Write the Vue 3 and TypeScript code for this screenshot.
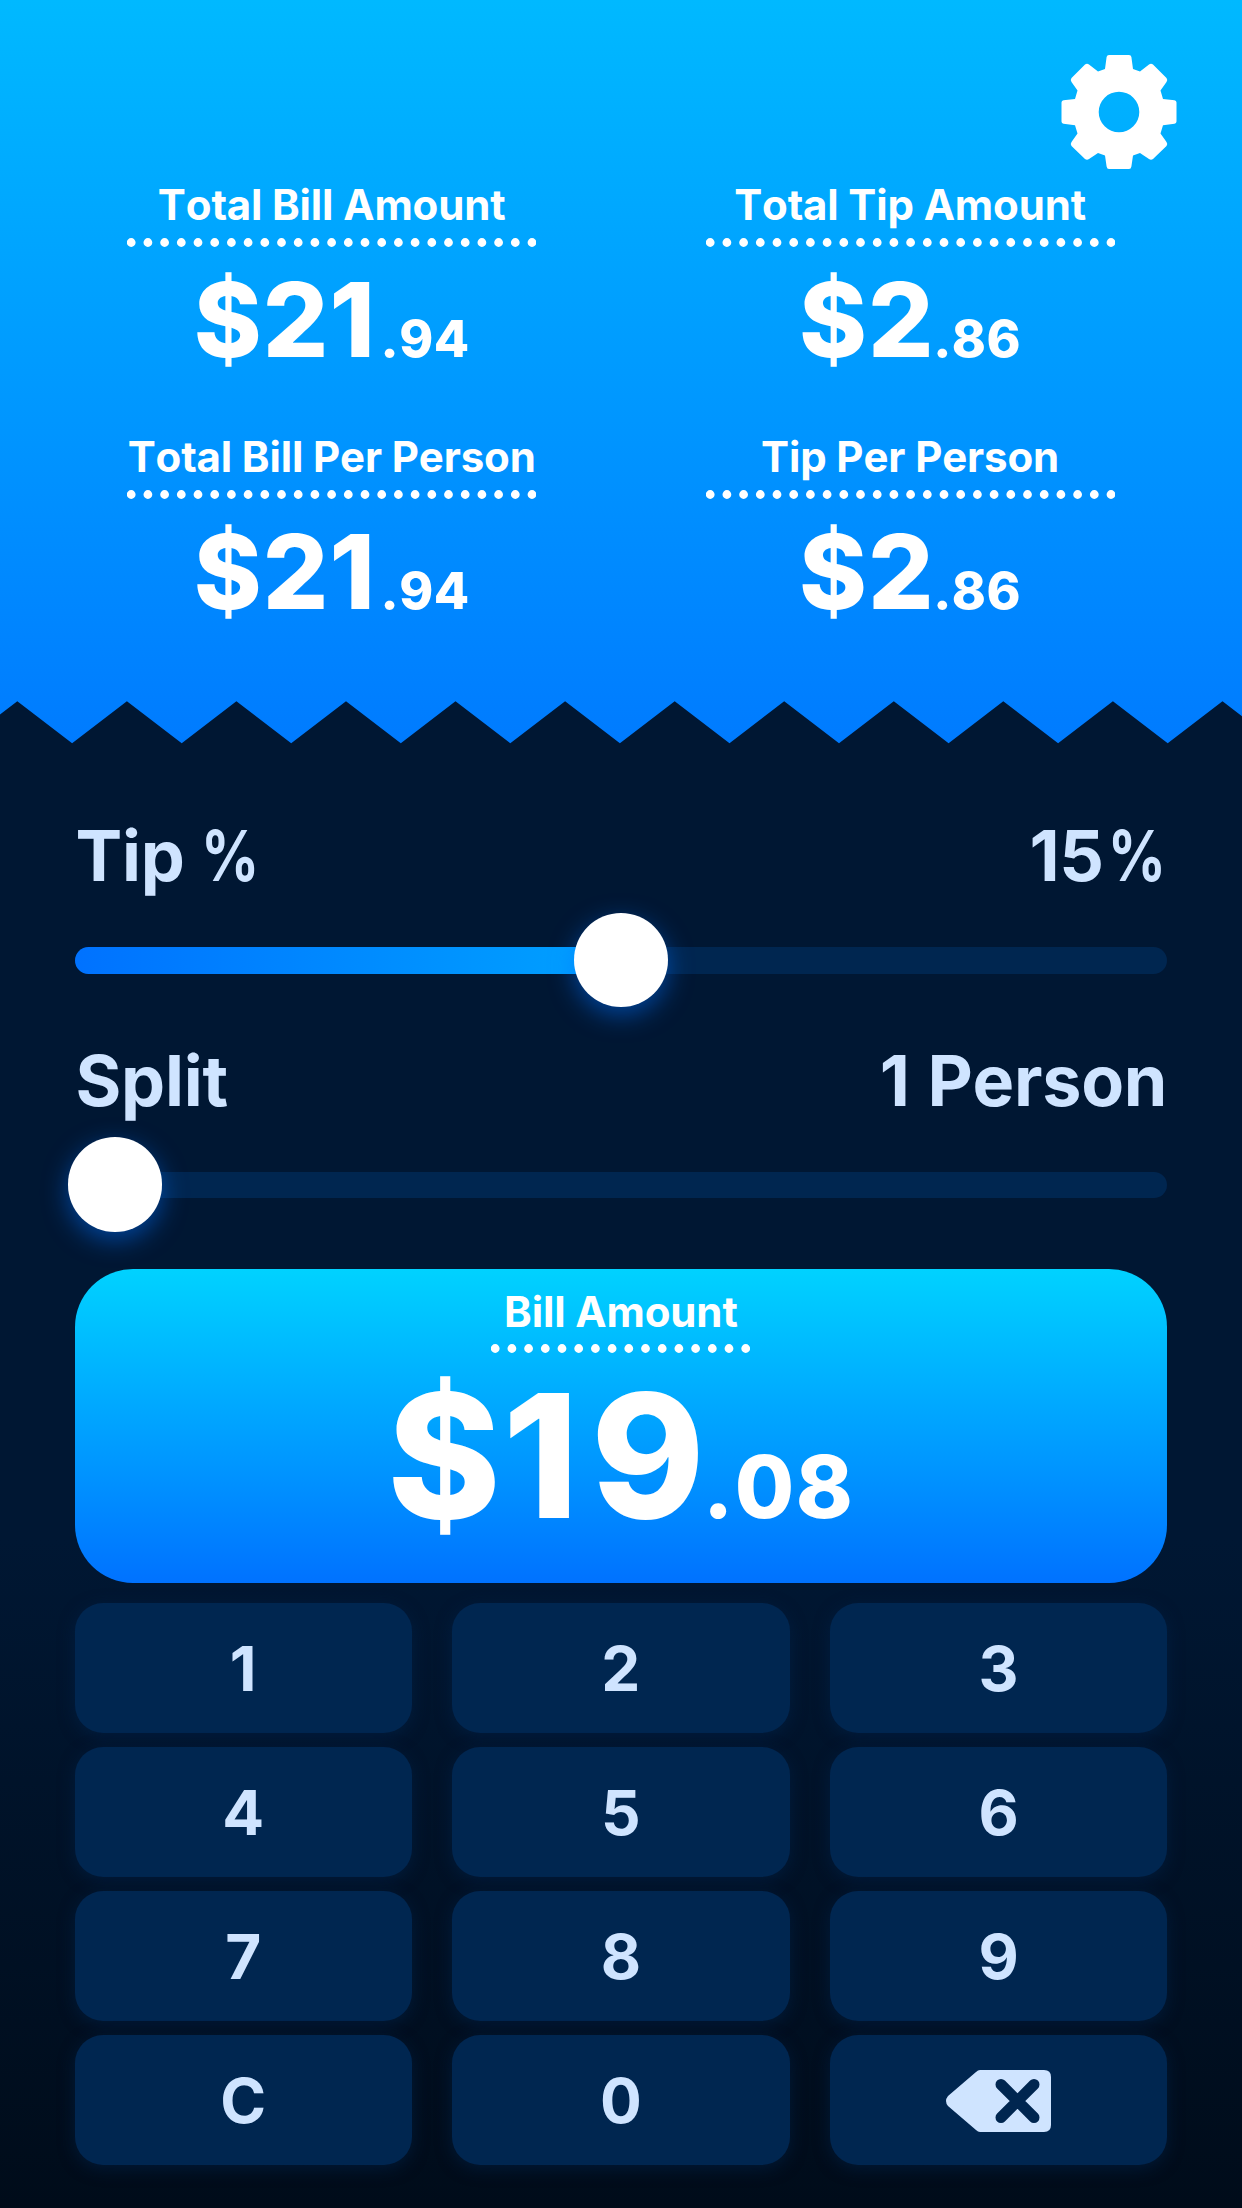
<script setup lang="ts">
import { computed, ref } from 'vue'

interface Metric {
  label: string
  whole: string
  cents: string
}

const metrics: Metric[] = [
  { label: 'Total Bill Amount', whole: '$21', cents: '.94' },
  { label: 'Total Tip Amount', whole: '$2', cents: '.86' },
  { label: 'Total Bill Per Person', whole: '$21', cents: '.94' },
  { label: 'Tip Per Person', whole: '$2', cents: '.86' },
]

const keys: string[] = ['1', '2', '3', '4', '5', '6', '7', '8', '9', 'C', '0', 'back']

const tip = ref(15)
const people = ref(1)
const tipFill = computed(() => `${(tip.value / 30) * 100}%`)

const teeth = computed(() => {
  const points: string[] = ['0,44', '0,14.6']
  for (let i = 0; i < 12; i++) {
    const peak = 17.3 + i * 109.56
    points.push(`${peak.toFixed(1)},1.3`, `${(peak + 54.8).toFixed(1)},43.3`)
  }
  points.push('1400,44')
  return points.join(' ')
})
</script>

<template>
  <main class="app">
    <header class="summary">
      <div class="toolbar">
        <button class="settings" aria-label="Settings">
          <svg width="116" height="116" viewBox="-58 -58 116 116">
            <path
              fill="#fff"
              fill-rule="evenodd"
              d="M-10-57H10Q12-57 12.400-55L14-43L21-40.500L30-47.500Q32-49 34-47.500L47.500-34Q49-32 47.500-30L41.500-21.500L44-13L55.500-11.800Q57.500-11.500 57.500-9.500V9.500Q57.500 11.500 55.500 11.800L44 13.200L41.500 21.500L47.500 30Q49 32 47.500 34L34 47Q32 48.500 30 47L21 41L14 43.500L12.400 54.500Q12 57 10 57H-10Q-12 57-12.400 54.500L-14 43.500L-21 41L-30 47Q-32 48.500-34 47L-47.500 34Q-49 32-47.500 30L-41.500 21.500L-44 13.200L-55.500 11.800Q-57.500 11.500-57.500 9.500V-9.500Q-57.500-11.500-55.500-11.800L-44-13L-41.500-21.500L-47.500-30Q-49-32-47.500-34L-34-47.500Q-32-49-30-47.500L-21-40.500L-14-43L-12.400-55Q-12-57-10-57ZM0-20.300A20.300 20.300 0 1 0 0 20.300A20.300 20.300 0 1 0 0-20.300Z"
            />
          </svg>
        </button>
      </div>
      <div class="metrics">
        <section v-for="m in metrics" :key="m.label" class="metric">
          <h2 class="label">{{ m.label }}</h2>
          <svg class="dots" width="409" height="9" viewBox="0 0 409 9">
            <line x1="4.200" y1="4.500" x2="406" y2="4.500" stroke="#fff" stroke-width="8.800" stroke-linecap="round" stroke-dasharray="0 16.700" />
          </svg>
          <p class="amount"><span v-for="(d, i) in m.whole" :key="i" :class="{ one: d === '1' }">{{ d }}</span><span class="cents">{{ m.cents }}</span></p>
        </section>
      </div>
      <svg class="teeth" width="1242" height="44" viewBox="0 0 1242 44">
        <polygon :points="teeth" fill="#001733" />
      </svg>
    </header>

    <div class="controls">
      <section class="slider">
        <div class="row">
          <span>Tip <span class="percent left">%</span></span>
          <span class="value shifted">{{ tip }}<span class="percent">%</span></span>
        </div>
        <div class="control">
          <div class="track"><div class="fill" :style="{ width: tipFill }"></div></div>
          <div class="thumb mid"></div>
        </div>
      </section>
      <section class="slider">
        <div class="row">
          <span>Split</span>
          <span class="value">{{ people }} Person</span>
        </div>
        <div class="control">
          <div class="track"></div>
          <div class="thumb start"></div>
        </div>
      </section>

      <section class="bill">
        <h2 class="label">Bill Amount</h2>
        <svg class="dots" width="259" height="9" viewBox="0 0 259 9">
          <line x1="4.200" y1="4.500" x2="256" y2="4.500" stroke="#fff" stroke-width="8.800" stroke-linecap="round" stroke-dasharray="0 16.700" />
        </svg>
        <p class="amount big">$<span class="one">1</span>9<span class="cents">.08</span></p>
      </section>

      <div class="keypad">
        <button v-for="k in keys" :key="k" class="key">
          <svg v-if="k === 'back'" class="back" width="106" height="62" viewBox="0 0 106 62" aria-label="Delete">
            <path d="M34 0H98Q105 0 105 7V55Q105 62 98 62H34Q32 62 30 60L2 36Q-2 31 2 26L30 2Q32 0 34 0Z" fill="#cfe4ff" />
            <path d="M55 14.500L88 47.500M88 14.500L55 47.500" stroke="#002650" stroke-width="11" stroke-linecap="round" />
          </svg>
          <template v-else>{{ k }}</template>
        </button>
      </div>
    </div>
  </main>
</template>

<style>
body {
  margin: 0;
  background: #000c1a;
}
</style>

<style scoped>
.app {
  width: 1242px;
  height: 2208px;
  overflow: hidden;
  font-family: 'Inter', 'Liberation Sans', sans-serif;
  font-kerning: none;
  background: linear-gradient(180deg, #001733 0, #001733 1540px, #000c1a 2208px);
}
.summary {
  display: flex;
  flex-direction: column;
  height: 744px;
  color: #fff;
  background: linear-gradient(180deg, #00b9ff, #007bff);
}
.toolbar {
  box-sizing: border-box;
  display: flex;
  justify-content: flex-end;
  height: 180px;
  padding: 54px 65px 0 0;
}
button {
  margin: 0;
  padding: 0;
  border: 0;
  background: none;
  font: inherit;
}
.settings {
  width: 116px;
  height: 116px;
}
svg {
  display: block;
}
.metrics {
  display: grid;
  grid-template-columns: 578.4px 578.4px;
  row-gap: 62px;
  padding-left: 42.5px;
}
.metric {
  display: flex;
  flex-direction: column;
  align-items: center;
  height: 190px;
}
.label {
  margin: 0 0 7.500px;
  font-size: 42px;
  line-height: 50px;
  font-weight: 700;
  letter-spacing: -0.130px;
  white-space: nowrap;
}
.amount {
  margin: 23.500px 0 0;
  font-size: 103px;
  line-height: 100px;
  font-weight: 800;
  letter-spacing: 1px;
  white-space: nowrap;
}
.one {
  margin-right: 0.060em;
}
.cents {
  margin-left: -0.030em;
  font-size: 51.500px;
  line-height: 0;
  letter-spacing: 0.500px;
}
.teeth {
  margin-top: auto;
  margin-bottom: 0;
}
.controls {
  padding: 72px 74.800px 0 74.500px;
}
.slider {
  height: 224.500px;
}
.row {
  display: flex;
  justify-content: space-between;
  padding-left: 1px;
  font-size: 70px;
  line-height: 80px;
  font-weight: 700;
  letter-spacing: -0.250px;
  word-spacing: 1.500px;
  color: #cfe4ff;
}
.shifted {
  margin-right: 1.500px;
}
.percent {
  display: inline-block;
  margin-left: -9px;
  transform: scaleX(0.82);
  transform-origin: 100% 50%;
}
.percent.left {
  margin: 0 0 0 -1px;
  transform-origin: 0 50%;
}
.control {
  position: relative;
  display: flex;
  align-items: center;
  height: 95px;
  margin-top: 17px;
}
.track {
  width: 100%;
  height: 26.500px;
  border-radius: 14px;
  overflow: hidden;
  background: #002650;
}
.fill {
  height: 100%;
  background: linear-gradient(90deg, #0072ff, #00a2ff);
}
.thumb {
  position: absolute;
  top: -0.500px;
  width: 94.500px;
  height: 94.500px;
  border-radius: 50%;
  background: #fff;
  box-shadow: 0 8px 24px rgba(0, 114, 255, 0.5);
}
.mid {
  left: 499.200px;
}
.start {
  left: -7px;
}
.bill {
  box-sizing: border-box;
  display: flex;
  flex-direction: column;
  align-items: center;
  height: 313.700px;
  margin-top: 4.300px;
  padding-top: 17.500px;
  border-radius: 58px;
  color: #fff;
  background: linear-gradient(180deg, #00d2ff, #0072ff);
}
.big {
  margin-top: 21.500px;
  font-size: 172px;
  line-height: 160px;
  letter-spacing: 2px;
}
.big .cents {
  margin-left: -0.045em;
  font-size: 86px;
  letter-spacing: 1.500px;
}
.keypad {
  display: grid;
  grid-template-columns: repeat(3, 1fr);
  column-gap: 40.300px;
  row-gap: 13.500px;
  margin-top: 20px;
}
.key {
  display: flex;
  align-items: center;
  justify-content: center;
  height: 130.500px;
  border-radius: 28px;
  background: #002650;
  box-shadow: 0 4px 16px rgba(0, 38, 80, 0.5);
  font-size: 62px;
  font-weight: 700;
  color: #cfe4ff;
}
.back {
  margin-top: 1px;
}
</style>
